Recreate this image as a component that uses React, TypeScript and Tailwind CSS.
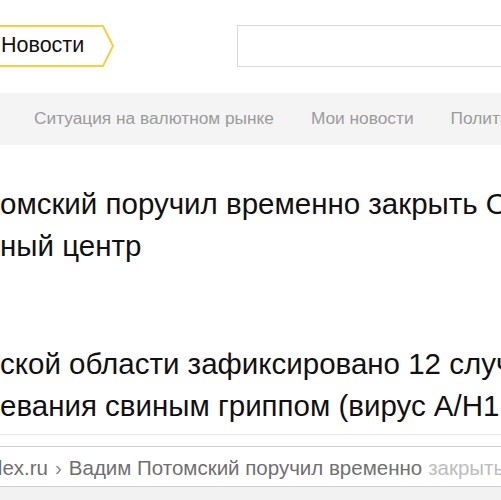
import React from 'react';

const font = { fontFamily: '"Liberation Sans", Arial, sans-serif' };

const NewsTag: React.FC = () => (
  <div className="relative h-[42px] w-[116px] shrink-0 flex items-center pl-[1px]">
    <svg className="absolute inset-0" width="116" height="42" viewBox="0 0 116 42">
      <path d="M-4 1 L103 1 L113 21 L103 41 L-4 41" fill="none" stroke="#f4d03f" strokeWidth="2" />
    </svg>
    <span className="relative text-[21.5px] leading-none text-[#111]">Новости</span>
  </div>
);

const App: React.FC = () => {
  return (
    <div className="w-[501px] h-[500px] overflow-hidden bg-white flex flex-col whitespace-nowrap" style={font}>
      <header className="h-[93px] shrink-0 flex items-start pt-[25px]">
        <NewsTag />
        <div className="ml-[121px] h-[42px] w-[300px] shrink-0 border border-[#d9d9d9] bg-white" />
      </header>

      <nav className="h-[52px] shrink-0 bg-[#f4f4f4] flex items-center pl-[34px] gap-[37px] text-[17.3px] text-[#9b9b9b]">
        <span>Ситуация на валютном рынке</span>
        <span>Мои новости</span>
        <span>Политика</span>
      </nav>

      <main className="flex-1 flex flex-col text-[29.5px] leading-[42px] text-[#111]">
        <div className="mt-[38px]">
          <div>омский поручил временно закрыть Областной</div>
          <div>ный центр</div>
        </div>
        <div className="mt-[76px]">
          <div>ской области зафиксировано 12 случаев</div>
          <div>евания свиным гриппом (вирус A/H1N1)</div>
        </div>
      </main>

      <footer className="shrink-0 flex flex-col">
        <div className="h-[12px] border-t border-[#e6e6e6]" />
        <div className="h-[41px] border-y border-[#cfcfcf] bg-white flex items-center pt-[4px] text-[20.5px] text-[#707070]">
          <span className="-ml-[9px]">dex.ru</span>
          <span className="mx-[7px] text-[#888]">›</span>
          <span>Вадим Потомский поручил временно</span>
          <span className="ml-[6px] text-[#bdbdbd]">закрыть</span>
        </div>
        <div className="h-[13px] bg-[#f2f2f2]" />
      </footer>
    </div>
  );
};

export default App;
